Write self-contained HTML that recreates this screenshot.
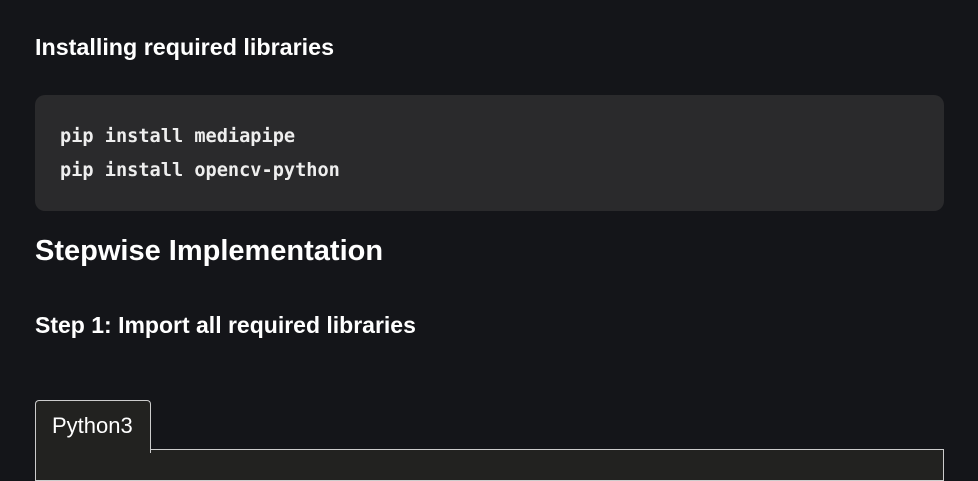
<!DOCTYPE html>
<html><head><style>
body{margin:0;background:#141519;width:978px;height:465px;overflow:hidden;color:#fff;font-family:"Liberation Sans",sans-serif;position:relative}
.h{position:absolute;left:35px;font-weight:bold;white-space:nowrap}
.code{position:absolute;left:35px;top:95px;width:909px;height:116px;background:#2a2a2c;border-radius:10px}
.code div{position:absolute;left:25px;font-family:"DejaVu Sans Mono","Liberation Mono",monospace;font-weight:bold;font-size:18.6px;color:#eee}
.tab{position:absolute;left:35px;top:400px;width:114px;height:52px;background:#222220;border:1px solid #ccc;border-bottom:none;border-radius:4px 4px 0 0;z-index:2}
.tab span{position:absolute;left:16px;top:12px;font-size:22px;color:#fff}
.box{position:absolute;left:35px;top:449px;width:907px;height:30px;background:#222220;border:1px solid #ccc}
</style></head><body>
<div class="h" style="top:34px;font-size:23.3px">Installing required libraries</div>
<div class="code"><div style="top:31px">pip install mediapipe</div><div style="top:65px">pip install opencv-python</div></div>
<div class="h" style="top:235px;font-size:29px">Stepwise Implementation</div>
<div class="h" style="top:312px;font-size:23px">Step 1: Import all required libraries</div>
<div class="box"></div>
<div class="tab"><span>Python3</span></div>
</body></html>
